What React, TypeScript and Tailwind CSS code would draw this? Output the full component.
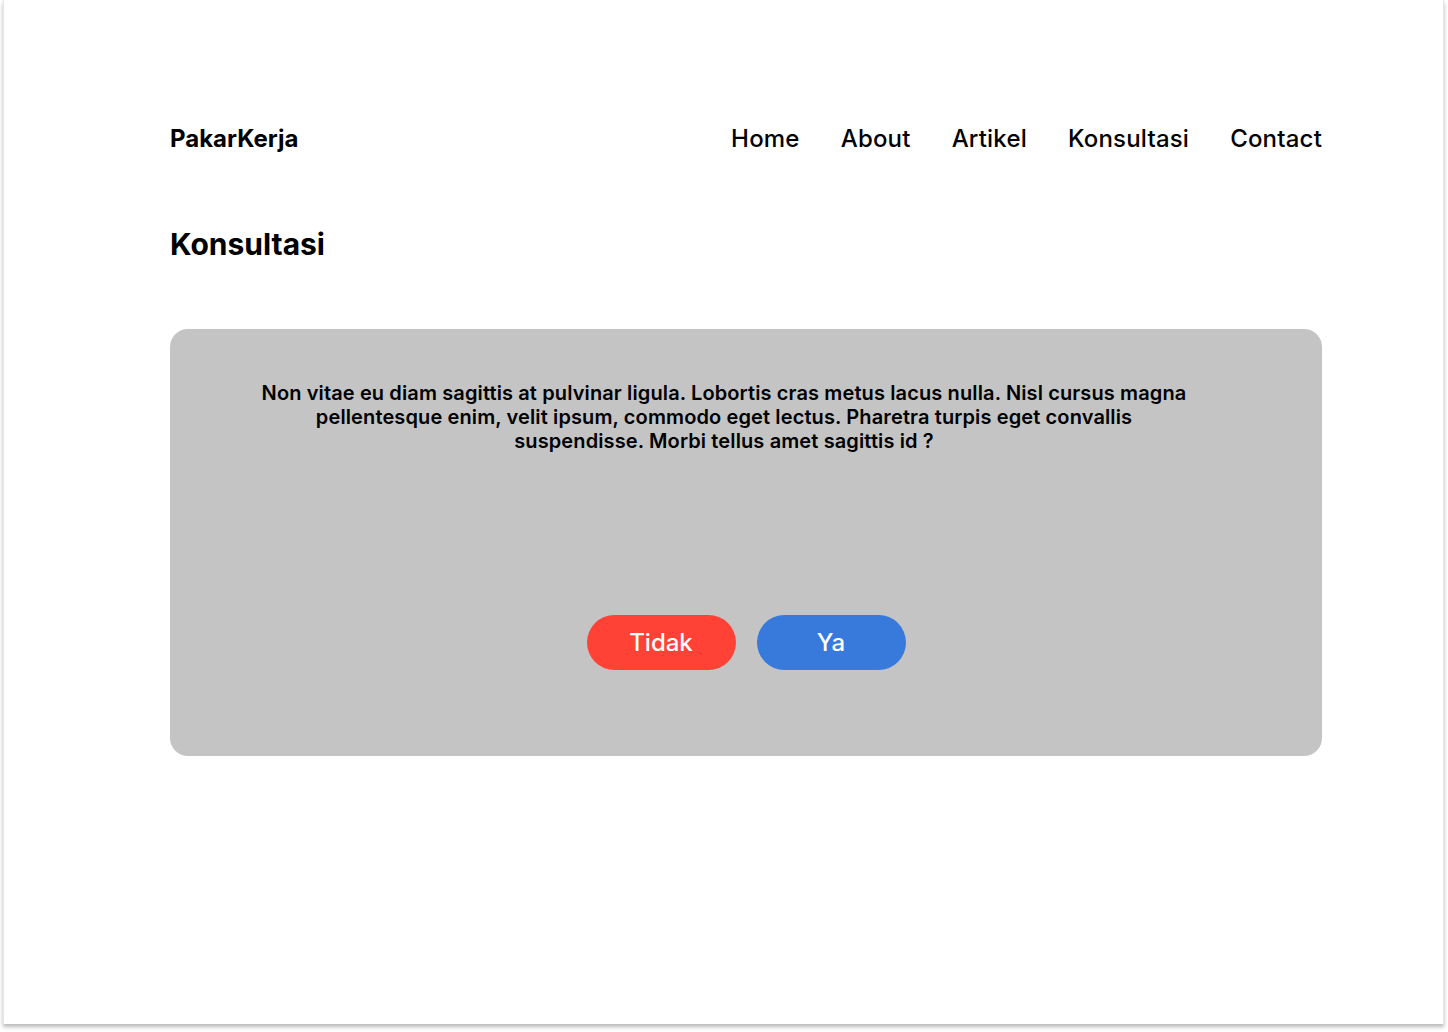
export default function App() {
  const nav = ["Home", "About", "Artikel", "Konsultasi", "Contact"];

  return (
    <main
      className="relative h-[1032px] w-[1448px] overflow-hidden bg-white text-black"
      style={{ fontFamily: "Inter, 'Liberation Sans', sans-serif" }}
    >
      {/* frame */}
      <div className="ml-[3px] h-[1024px] w-[1441px] border-l border-r border-[#e6e6e6] bg-white shadow-[0_3px_4px_rgba(0,0,0,0.28)]">
        <div className="ml-[166px] w-[1152px] pt-[123px]">
          <header className="flex items-center justify-between">
            <span className="text-[24px] font-bold leading-[32px]">
              PakarKerja
            </span>
            <nav className="flex items-center gap-[41px]">
              {nav.map((item) => (
                <a
                  key={item}
                  href="#"
                  className="text-[24px] font-medium leading-[32px] tracking-[0.2px]"
                >
                  {item}
                </a>
              ))}
            </nav>
          </header>

          <h1 className="mt-[71px] text-[30px] font-bold leading-[36px]">
            Konsultasi
          </h1>

          <section className="mt-[67px] flex h-[427px] flex-col items-center rounded-[18px] bg-[#c4c4c4] pt-[52px]">
            <p className="mr-[44px] w-[930px] text-center text-[20px] font-semibold leading-[24px] tracking-[0.12px]">
              Non vitae eu diam sagittis at pulvinar ligula. Lobortis cras metus
              lacus nulla. Nisl cursus magna pellentesque enim, velit ipsum,
              commodo eget lectus. Pharetra turpis eget convallis suspendisse.
              Morbi tellus amet sagittis id ?
            </p>

            <div className="mt-[162px] flex gap-[21px]">
              <button className="h-[55px] w-[149px] rounded-full bg-[#ff4136] text-[24px] font-medium text-white">
                Tidak
              </button>
              <button className="h-[55px] w-[149px] rounded-full bg-[#377adb] text-[24px] font-medium text-white">
                Ya
              </button>
            </div>
          </section>
        </div>
      </div>
    </main>
  );
}
